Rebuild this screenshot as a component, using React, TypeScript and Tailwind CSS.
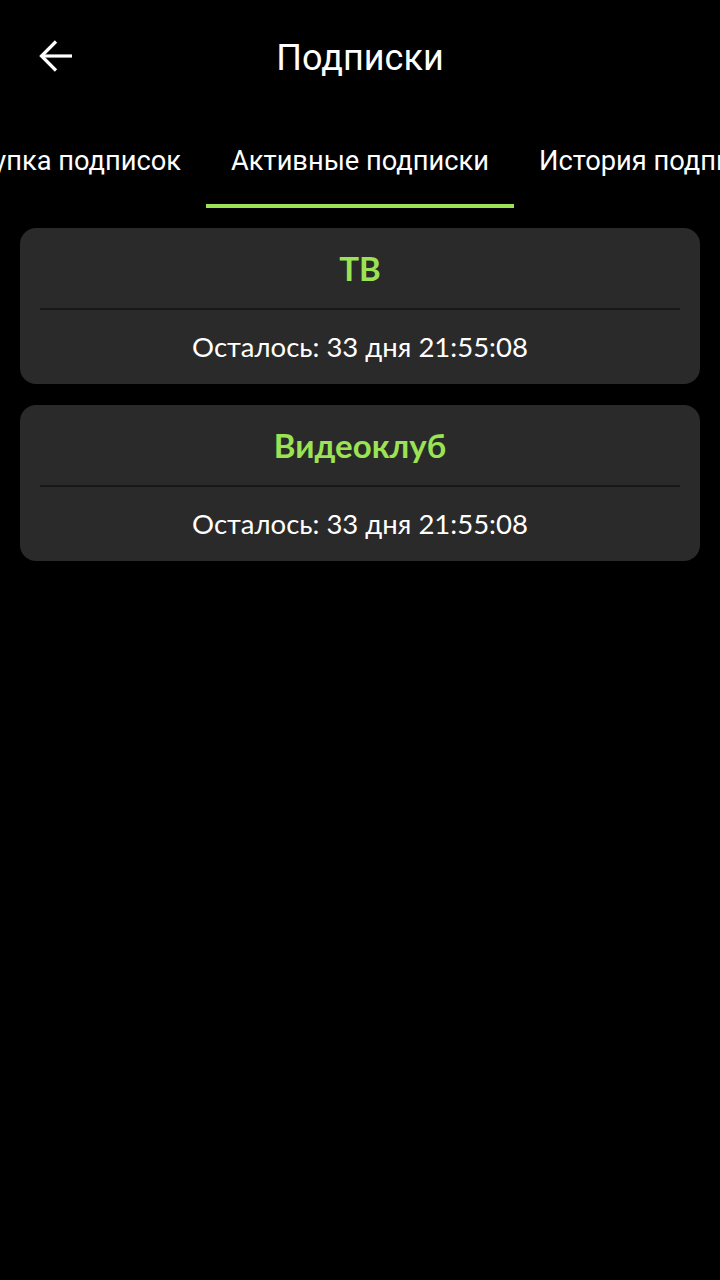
import React from "react";

function BackArrow() {
  return (
    <svg width="36" height="36" viewBox="0 0 36 36" fill="none" className="block">
      <path d="M34 18H5" stroke="white" strokeWidth="3.2" strokeLinecap="butt" />
      <path d="M18 3.5L3.5 18L18 32.5" stroke="white" strokeWidth="3.2" strokeLinecap="butt" strokeLinejoin="miter" />
    </svg>
  );
}

function Card({ title }: { title: string }) {
  return (
    <div className="rounded-2xl bg-[#2a2a2a] flex flex-col">
      <div className="h-[80px] flex items-center justify-center">
        <span className="text-[#9be354] text-[33px] font-bold font-['Lato','Roboto',sans-serif] leading-none">{title}</span>
      </div>
      <div className="mx-5 h-[2px] bg-[#181818]" />
      <div className="h-[74px] flex items-center justify-center">
        <span className="text-white text-[27.5px] font-['Lato','Roboto',sans-serif] leading-none">Осталось: 33 дня 21:55:08</span>
      </div>
    </div>
  );
}

export default function App() {
  return (
    <div className="w-[720px] h-[1280px] bg-black overflow-hidden font-['Roboto',sans-serif]">
      <div className="relative h-[116px] flex items-center justify-center">
        <div className="absolute left-[38px] top-[38px]">
          <BackArrow />
        </div>
        <span className="text-white text-[36px] leading-none">Подписки</span>
      </div>
      <div className="flex h-[92px] overflow-hidden">
        <div className="flex-1 min-w-0 flex justify-end overflow-hidden">
          <div className="shrink-0 px-[25px] flex items-center whitespace-nowrap text-white text-[27.25px] pb-[2px]">
            Покупка подписок
          </div>
        </div>
        <div className="shrink-0 relative px-[25px] flex items-center whitespace-nowrap text-white text-[27.25px] pb-[2px]">
          Активные подписки
          <div className="absolute left-0 right-0 bottom-0 h-[4px] bg-[#9be354]" />
        </div>
        <div className="flex-1 min-w-0 flex justify-start overflow-hidden">
          <div className="shrink-0 px-[25px] flex items-center whitespace-nowrap text-white text-[27.25px] pb-[2px]">
            История подписок
          </div>
        </div>
      </div>
      <div className="px-5 pt-5 flex flex-col gap-[21px]">
        <Card title="ТВ" />
        <Card title="Видеоклуб" />
      </div>
    </div>
  );
}
